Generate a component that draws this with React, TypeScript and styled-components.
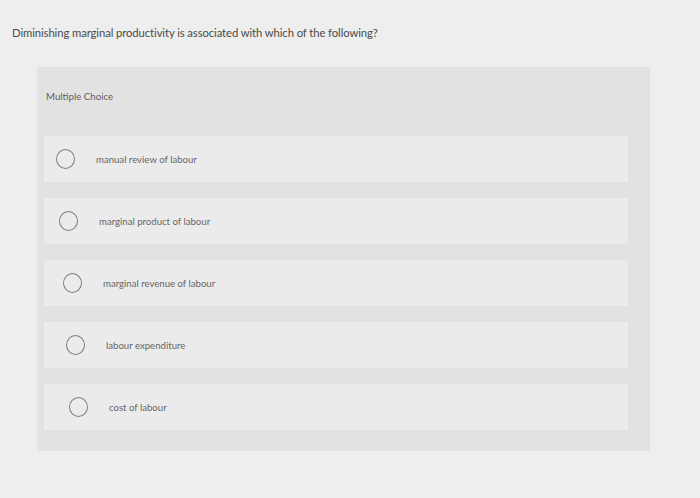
import React from "react";
import styled, { createGlobalStyle } from "styled-components";

const Global = createGlobalStyle`
  html, body {
    margin: 0;
    padding: 0;
    background: #eeeeee;
  }
  body {
    font-family: Lato, "Open Sans", "Liberation Sans", sans-serif;
    color: #444;
  }
`;

const Page = styled.div`
  width: 700px;
  height: 498px;
  background: #eeeeee;
  padding-top: 26px;
  box-sizing: border-box;
  overflow: hidden;
`;

const Question = styled.div`
  padding-left: 12px;
  font-size: 11.3px;
  line-height: 14px;
  color: #4a4a4a;
  letter-spacing: -0.1px;
`;

const Panel = styled.section`
  margin: 27px 0 0 37px;
  width: 613px;
  background: #e2e2e2;
  padding: 0 22px 21px 7px;
  box-sizing: border-box;
`;

const Header = styled.div`
  height: 69px;
  padding: 23px 0 0 2px;
  box-sizing: border-box;
  font-size: 9.7px;
  line-height: 12px;
  color: #5e5e5e;
`;

const Options = styled.div`
  display: flex;
  flex-direction: column;
  gap: 16px;
`;

const Card = styled.label<{ $shift: number }>`
  display: flex;
  align-items: center;
  height: 46px;
  padding-left: ${(p) => 12 + p.$shift}px;
  box-sizing: border-box;
  background: #ebebeb;
  cursor: pointer;
`;

const Radio = styled.span`
  width: 19px;
  height: 20px;
  border: 1.3px solid #7e7e7e;
  border-radius: 50%;
  flex-shrink: 0;
  box-sizing: border-box;
`;

const OptionText = styled.span`
  margin-left: 21px;
  font-size: 9.6px;
  color: #666;
`;

const options = [
  "manual review of labour",
  "marginal product of labour",
  "marginal revenue of labour",
  "labour expenditure",
  "cost of labour",
];

export default function App() {
  return (
    <Page>
      <Global />
      <Question>
        Diminishing marginal productivity is associated with which of the following?
      </Question>
      <Panel>
        <Header>Multiple Choice</Header>
        <Options>
          {options.map((o, i) => (
            <Card key={o} $shift={Math.round(i * 3.3)}>
              <Radio />
              <OptionText>{o}</OptionText>
            </Card>
          ))}
        </Options>
      </Panel>
    </Page>
  );
}
